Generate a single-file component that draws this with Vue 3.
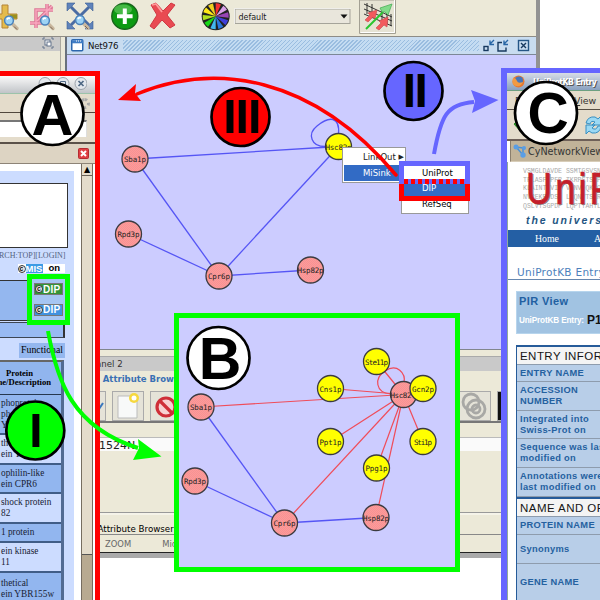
<script setup>
const pink = '#ff9999'
const yellow = '#ffff00'

const mainNodes = [
  { x: 135, y: 159, label: 'Sba1p', fill: pink },
  { x: 128.5, y: 234, label: 'Rpd3p', fill: pink },
  { x: 219, y: 276, label: 'Cpr6p', fill: pink },
  { x: 310.5, y: 270, label: 'Hsp82p', fill: pink },
  { x: 338.5, y: 146.5, label: 'Hsc82p', fill: yellow },
]
const mainEdges = [
  [0, 4], [0, 2], [1, 2], [2, 4], [2, 3],
]

const subNodes = [
  { x: 201, y: 407, label: 'Sba1p', fill: pink },
  { x: 195, y: 481, label: 'Rpd3p', fill: pink },
  { x: 284.5, y: 523, label: 'Cpr6p', fill: pink },
  { x: 376, y: 517.5, label: 'Hsp82p', fill: pink },
  { x: 376.5, y: 361.5, label: 'Ste11p', fill: yellow },
  { x: 330.5, y: 388.5, label: 'Cns1p', fill: yellow },
  { x: 330.5, y: 441.5, label: 'Ppt1p', fill: yellow },
  { x: 376.5, y: 468, label: 'Ppg1p', fill: yellow },
  { x: 423, y: 441.5, label: 'Sti1p', fill: yellow },
  { x: 403.5, y: 394.5, label: 'Hsc82', fill: pink },
  { x: 423, y: 388.5, label: 'Gcn2p', fill: yellow },
]
const subEdges = [
  [0, 2, 'blue'], [1, 2, 'blue'], [2, 3, 'blue'],
  [0, 9, 'red'], [2, 9, 'red'], [3, 9, 'red'], [4, 9, 'red'],
  [5, 9, 'red'], [6, 9, 'red'], [7, 9, 'red'], [8, 9, 'red'],
]
const labelWidths = { Hsp82p: 26, Hsc82p: 26, Ste11p: 23, Hsc82: 21, Sti1p: 18 }

const badges = [
  { x: 52.5, y: 114, r: 31, t: 'A', fill: '#fff', size: 58, base: 134.5, tx: 52.5 },
  { x: 240.5, y: 117, r: 29, t: 'III', fill: '#f00', size: 48, base: 133.3, tx: 242 },
  { x: 413.5, y: 91, r: 29, t: 'II', fill: '#6666ff', size: 48, base: 107.3, tx: 415.3 },
  { x: 546, y: 113, r: 31, t: 'C', fill: '#fff', size: 57, base: 132.5, tx: 548 },
  { x: 218.5, y: 358, r: 31, t: 'B', fill: '#fff', size: 59, base: 379, tx: 220 },
  { x: 35.3, y: 430.5, r: 29, t: 'I', fill: '#0f0', size: 48, base: 447.3, tx: 36 },
]

const wheel = ['#f33030', '#d9a0e8', '#9845b5', '#4040d8', '#2b78e0', '#42b8f0', '#18d818', '#b0e020', '#ffe818', '#f0d020']
function wedge(i) {
  const a = ((i * 36 - 90) * Math.PI) / 180
  const b = ((i * 36 - 66) * Math.PI) / 180
  return `M0 0L${13 * Math.cos(a)} ${13 * Math.sin(a)}A13 13 0 0 1 ${13 * Math.cos(b)} ${13 * Math.sin(b)}Z`
}

const proteins = [
  { h: 40, lines: ['phoprotein', 'phatase', 'YPH1'], dark: true },
  { h: 30, lines: ['thetical', 'ein YBR1'], dark: false },
  { h: 29, lines: ['ophilin-like', 'ein CPR6'], dark: true },
  { h: 30, lines: ['shock protein', '82'], dark: false },
  { h: 19, lines: ['1 protein'], dark: true },
  { h: 30, lines: ['ein kinase', '11'], dark: false },
  { h: 34, lines: ['thetical', 'ein YBR155w'], dark: true },
]
const entryRows = [
  { h: 17, lines: ['ENTRY NAME'] },
  { h: 29, lines: ['ACCESSION', 'NUMBER'] },
  { h: 28, lines: ['Integrated into', 'Swiss-Prot on'] },
  { h: 29, lines: ['Sequence was last', 'modified on'] },
  { h: 29, lines: ['Annotations were', 'last modified on'] },
]
const nameRows = [
  { h: 18, lines: ['PROTEIN NAME'] },
  { h: 29, lines: ['Synonyms'] },
  { h: 38, lines: ['GENE NAME'] },
]
</script>

<template>
  <main class="desktop">
    <section class="app-window">
      <header class="toolbar">
        <svg width="440" height="36" viewBox="0 0 440 36">
          <defs>
            <g id="lens">
              <path d="M4 4l4 4" stroke="#c9b79d" stroke-width="3.4" stroke-linecap="round" />
              <path d="M5 6l3 3" stroke="#7b6552" stroke-width="1" />
              <circle r="4.4" fill="#9dd3f5" stroke="#4a82bb" stroke-width="1.5" />
              <path d="M-2-1q1-2 3-1" stroke="#fff" stroke-width="1.8" fill="none" />
            </g>
          </defs>
          <path d="M-5 14h7V5h6v9h9v5H8v9H2v-9h-7z" fill="#e4bb4c" stroke="#b58335" />
          <path d="M10 14.500h7v4h-7z" fill="#98901f" />
          <use href="#lens" x="9" y="20.500" />
          <path d="M30 23h17V4M36 28V10h17M37 21L52 6" fill="none" stroke="#dc7795" stroke-width="3.500" />
          <path d="M30 23h17V4M36 28V10h17M37 21L52 6" fill="none" stroke="#f9a8bf" stroke-width="1.400" />
          <use href="#lens" x="45" y="20.500" />
          <path d="M71 7l18 18M89 7L71 25" stroke="#4a6ca3" stroke-width="3" />
          <g fill="#5f83bb" stroke="#3c5f95" stroke-width=".6">
            <path d="M67 3h8l-8 8zM93 3h-8l8 8zM67 29h8l-8-8zM93 29h-8l8-8z" />
          </g>
          <use href="#lens" x="80" y="20" />
          <circle cx="124.8" cy="16.2" r="13" fill="#0d9a13" stroke="#17641a" stroke-width="1.4" />
          <ellipse cx="123" cy="9.5" rx="9" ry="5" fill="#5fc65c" opacity=".7" />
          <path d="M124.8 8.5v15.5M117 16.2h15.6" stroke="#fff" stroke-width="4" />
          <path d="M151 5l5-2 7 8 8-8 4 2-8 10 8 10-5 3-8-8-8 9-4-3 7-11z" fill="#e94a52" stroke="#cf3843" />
          <path d="M152 5l4-1 6 8" stroke="#ff9a9a" stroke-width="1.800" fill="none" />
          <g transform="translate(215.7 16.3)">
            <circle r="14" fill="#222" />
            <path v-for="(c, i) in wheel" :key="i" :d="wedge(i)" :fill="c" />
          </g>
          <rect x="235" y="9" width="115" height="14.5" fill="#e9e6dc" stroke="#a5a49a" />
          <path d="M234.5 24V8.5H351" stroke="#fff" fill="none" opacity=".7" />
          <text x="238.5" y="19.5" class="ui" textLength="28">default</text>
          <path d="M340.5 14.5h7l-3.5 4z" fill="#111" />
          <path d="M359.5 33.5V0h36v33.5z" fill="#e6e3d4" stroke="#a3a093" />
          <path d="M360.5 32.5h34V0" stroke="#fff" fill="none" />
          <path d="M364 4l28 13M364 9l28 12M364 14l28 12M367 3v11M372 4v13M382 9v12M387 12v12M391 14v12" stroke="#222" stroke-width=".9" />
          <path d="M365 20l5-5-2-2 9-3-2 9-2-2-5 5zM376 28l5-5-2-2 9-4-1 10-3-2-5 5z" fill="#f25a5d" stroke="#c9444c" stroke-width=".6" />
          <path d="M366 29l17-17" stroke="#29c52f" stroke-width="2" />
          <path d="M382 12l-2-4 12-4-4 11-3-3z" fill="#82db8a" stroke="#40a950" stroke-width=".7" />
        </svg>
      </header>
      <div class="workspace">
        <aside class="left-panel">
          <div class="left-title">
            <svg width="12" height="12" viewBox="0 0 12 12" fill="none" stroke="#64748c">
              <path d="M1 3V1h2M9 1h2v2M11 9v2H9M3 11H1V9" />
              <rect x="3" y="3" width="5" height="5" fill="#fff" /><rect x="5" y="5" width="4" height="4" fill="#fff" />
            </svg>
          </div>
        </aside>
        <section class="net-frame">
          <header class="net-title">
            <svg width="13" height="13" viewBox="0 0 13 13"><rect x=".75" y=".75" width="11" height="11" rx="1" fill="#fff" stroke="#2c67ae" stroke-width="1.5" /><path d="M1 2.8h11" stroke="#3f7cc4" stroke-width="3" /><path d="M5 2h1M7 2h1M9 2h1" stroke="#fff" /></svg>
            <span class="net-name">Net976</span>
            <span class="hatch"></span>
            <svg class="frame-buttons" width="48" height="13" viewBox="0 0 48 13" fill="none" stroke="#17395f" stroke-width="1.4">
              <rect x="1" y="7.5" width="4" height="4" /><path d="M11 1L7 5M7 1.5v4h4" stroke="#2866a5" />
              <path d="M19 3.5h-4V12h8V8.5" /><path d="M25 1l-4 4M21 1.5v4h4" stroke="#2866a5" />
              <rect x="35.5" y="1.5" width="10" height="10" stroke="#245585" /><path d="M38 4l5 5M43 4l-5 5" />
            </svg>
          </header>
          <div class="canvas"></div>
        </section>
      </div>
      <section class="data-panel">
        <div class="panel-title">Data Panel 2</div>
        <div class="attr-title">Node Attribute Browser</div>
        <div class="attr-tools">
          <span class="tool"><svg width="30" height="32" viewBox="0 0 30 32"><path d="M24 17l4-6" stroke="#3977bd" stroke-width="2" /></svg></span>
          <span class="tool"><svg width="30" height="32" viewBox="0 0 30 32"><path d="M5 4h19v22H5z" fill="#f8f9f9" stroke="#bbb" /><circle cx="21" cy="6" r="5" fill="#f6d83e" /><circle cx="21" cy="6" r="2.5" fill="#fff" /></svg></span>
          <span class="tool"><svg width="30" height="32" viewBox="0 0 30 32"><circle cx="15" cy="15" r="9" fill="#f7d1d1" stroke="#cf2f38" stroke-width="3.2" /><path d="M9 9l12 12" stroke="#cf2f38" stroke-width="3.2" /></svg></span>
          <span class="tool far"><svg width="30" height="32" viewBox="0 0 30 32" fill="none" stroke="#a8a8a5" stroke-width="2.800"><circle cx="11" cy="10" r="8" /><circle cx="16" cy="17" r="9" /><circle cx="16" cy="17" r="4" /></svg></span>
          <span class="tool fx"></span>
        </div>
        <div class="column-head"></div>
        <div class="data-row">1524N</div>
        <div class="data-empty"></div>
        <div class="attr-tab">Node Attribute Browser</div>
        <footer class="status"><span>ZOOM</span><span>Middle</span></footer>
      </section>
    </section>

    <section class="browser browser-a">
      <header class="a-title">
        <svg width="50" height="15" viewBox="0 0 50 15"><g fill="#e4e8ed" stroke="#9ba2aa"><circle cx="8" cy="7.5" r="6" /><circle cx="26" cy="7.5" r="6" /><path d="M23.500 5.500h5v4h-5z" stroke="#506985" /><circle cx="44" cy="7.500" r="6" /></g><path d="M41.500 5l5 5M46.500 5l-5 5" stroke="#506985" stroke-width="1.700" /></svg>
      </header>
      <div class="a-menu"><span class="throbber"></span></div>
      <div class="a-address"><span></span></div>
      <div class="a-tabs"><svg width="11" height="11" viewBox="0 0 11 11"><rect x=".5" y=".5" width="10" height="10" rx="1" fill="#df3f42" stroke="#b52b32" /><path d="M3 3l5 5M8 3L3 8" stroke="#fff" stroke-width="2" /></svg></div>
      <div class="a-body">
        <div class="a-page">
          <div class="a-box"></div>
          <div class="search-links">RCH:TOP][LOGIN]</div>
          <div class="mis"><span class="logo"><b class="c-mark">c</b><i>MIS</i></span><strong>on</strong></div>
          <div class="dip-row"></div>
          <div class="blank-row"></div>
          <div class="functional"><span>Functional</span></div>
          <div class="protein-table">
            <div class="protein-head"><span>Protein</span><span>me/Description</span></div>
            <div v-for="(p, i) in proteins" :key="i" class="protein" :class="{ dark: p.dark }" :style="{ height: p.h + 'px' }">
              <span v-for="l in p.lines" :key="l">{{ l }}</span>
            </div>
          </div>
        </div>
        <div class="scroll"><span class="scroll-up">▲</span><span class="thumb"></span></div>
      </div>
    </section>

    <section class="browser browser-c">
      <header class="c-title">
        <svg width="13" height="13" viewBox="0 0 13 13"><circle cx="6.5" cy="6.5" r="6" fill="#e87831" /><circle cx="7" cy="5.5" r="4" fill="#4776b9" /><path d="M1 3q3 0 4 3t6 1q-2 5-7 4T1 3" fill="#f29a43" /></svg>
        <span>UniProtKB Entry</span>
      </header>
      <div class="c-menu"><span>File</span><span><u>V</u>iew</span></div>
      <div class="c-nav">
        <svg width="20" height="26" viewBox="0 0 20 26"><path d="M1 12l8-7v5h9v6H9v5z" fill="#43bb35" stroke="#258d27" /></svg>
        <svg width="20" height="22" viewBox="0 0 20 22"><path d="M2 9Q4 2 11 3l3 2 3-3v9H8l3-3Q7 6 6 10zM17 12q-1 8-9 7l-3-2-3 3v-9h9l-3 3q4 3 6-2z" fill="#9bd9f4" stroke="#378fc2" /></svg>
      </div>
      <div class="c-tab"><svg width="14" height="14" viewBox="0 0 14 14"><path d="M3 3l7 1M4 4l6 7M10 4v7" stroke="#4b91d5" fill="none" stroke-width="1.5" /><g fill="#5a9ee5"><circle cx="3" cy="3" r="2.5" /><circle cx="11" cy="4" r="2" /><circle cx="10" cy="11" r="2.7" /></g></svg><span>CyNetworkView</span></div>
      <div class="c-page">
        <div class="hero">
          <div class="sequence">VSMGLDAVDE SSMTGSVSNK<br>TPLASFTPFP TKRPSTSKPT<br>KLAINTEVIL VVNVFQKRQP<br>NVPEKRPDSL LGQNVTSKR<br>QSLVTSGPDP LQPTYAHTLE</div>
          <div class="wordmark">UniProt</div>
          <div class="tagline">the universal</div>
        </div>
        <nav class="site-nav"><span>Home</span><span>About</span></nav>
        <h1>UniProtKB Entry</h1>
        <div class="pir"><strong>PIR View</strong><p><b>UniProtKB Entry:</b><span>P15108</span></p></div>
        <div class="entry-table">
          <div class="section-head">ENTRY INFORMATION</div>
          <div v-for="r in entryRows" :key="r.lines[0]" class="entry" :style="{ height: r.h + 'px' }"><span v-for="l in r.lines" :key="l">{{ l }}</span></div>
          <div class="section-head second">NAME AND ORIGIN</div>
          <div v-for="r in nameRows" :key="r.lines[0]" class="entry" :style="{ height: r.h + 'px' }"><span v-for="l in r.lines" :key="l">{{ l }}</span></div>
        </div>
      </div>
    </section>

    <section class="inset"></section>

    <svg class="graph" width="600" height="600" viewBox="0 0 600 600">
      <defs>
        <pattern id="dots" width="2" height="2" patternUnits="userSpaceOnUse"><path d="M0 0h1v1H0zM1 1h1v1H1z" fill="#333" opacity=".05" /></pattern>
      </defs>
      <g class="blue">
        <line v-for="([a, b], i) in mainEdges" :key="i" :x1="mainNodes[a].x" :y1="mainNodes[a].y" :x2="mainNodes[b].x" :y2="mainNodes[b].y" />
        <path d="M326 146.500C311 147 307 134 317 126C329 116 340 116 338.500 134" />
      </g>
      <line v-for="([a, b, c], i) in subEdges" :key="'s' + i" :class="c" :x1="subNodes[a].x" :y1="subNodes[a].y" :x2="subNodes[b].x" :y2="subNodes[b].y" />
      <path class="red" d="M391 394C375 393 374 378 385 371C397 363 406 373 404 383" />
      <g v-for="(n, i) in [...mainNodes, ...subNodes]" :key="'n' + i">
        <circle :cx="n.x" :cy="n.y" r="13" :fill="n.fill" stroke="#3b3b40" stroke-width="1.3" />
        <circle v-if="n.fill === pink" :cx="n.x" :cy="n.y" r="12.500" fill="url(#dots)" />
        <text class="node-label" :x="n.label === 'Hsc82' ? n.x - 2.5 : n.x" :y="n.y + 3" :textLength="labelWidths[n.label] || 22">{{ n.label }}</text>
      </g>
    </svg>

    <div class="menu">
      <div><span>LinkOut</span><i>▶</i></div>
      <div class="selected"><span>MiSink</span></div>
    </div>
    <div class="submenu"><span>UniProt</span><span class="selected">DIP</span><span>RefSeq</span></div>
    <div class="uniprot-outline"></div>
    <div class="dip-outline"></div>
    <div class="dip-callout"><span class="green-logo"><b class="c-mark">c</b><i>DIP</i></span><span><b class="c-mark">c</b><i>DIP</i></span></div>

    <svg class="annotations" width="600" height="600" viewBox="0 0 600 600">
      <path d="M396 175C312 75 215 62 137 94" fill="none" stroke="red" stroke-width="3.500" stroke-linecap="round" />
      <path d="M118 100L136 84L135 93L141 101Z" fill="red" />
      <path d="M434 154C441 115 447 104 474 102" fill="none" stroke="#6666ff" stroke-width="4" />
      <path d="M498.500 100L471 90L475 101L472 113Z" fill="#6666ff" />
      <path d="M48 331C57 381 72 427 138 448" fill="none" stroke="#00ff00" stroke-width="4" />
      <path d="M161.500 456.500L138 439L139 448L133 460Z" fill="#00ff00" />
      <g v-for="b in badges" :key="b.t">
        <circle :cx="b.x" :cy="b.y" :r="b.r" :fill="b.fill" stroke="#000" stroke-width="2.700" />
        <text :x="b.tx" :y="b.base" :font-size="b.size" class="badge-text" :textLength="b.t === 'III' ? 38 : b.t === 'II' ? 25 : undefined">{{ b.t }}</text>
      </g>
    </svg>
  </main>
</template>

<style>
body { background: #fff; }
</style>
<style scoped>
* { box-sizing: border-box; }
.desktop { width: 600px; height: 600px; position: relative; overflow: hidden; background: #fff; font-family: "DejaVu Sans", sans-serif; white-space: nowrap; }
svg { display: block; flex: none; }
.app-window { width: 540px; height: 558px; background: #ece9d8; border-right: 4px solid #929292; display: flex; flex-direction: column; }
.toolbar { height: 37px; border-bottom: 1px solid #8e8c86; flex: none; }
.ui { font-size: 8px; fill: #222; }
.workspace { height: 313px; display: flex; flex: none; }
.left-panel { width: 61px; border-right: 1px solid #aaa89e; margin-right: 4px; }
.left-title { height: 14px; background: #c9c9c9; display: flex; justify-content: flex-end; padding-right: 6px; }
.net-frame { flex: 1; display: flex; flex-direction: column; border-left: 2px solid #68707c; }
.net-title { height: 18px; display: flex; align-items: center; gap: 4px; padding: 0 5px 0 4px; background: #c8dcf0; border-bottom: 1px solid #7c8796; flex: none; }
.net-name { font-size: 8.600px; color: #111; width: 31px; letter-spacing: -.2px; }
.hatch { flex: 1; height: 11px; background: repeating-linear-gradient(135deg, #9abde0 0, #9abde0 1px, #c4dcf2 1px, #c4dcf2 2.800px); }
.canvas { flex: 1; background: #ccccff; border-bottom: 1px solid #81868e; }
.data-panel { flex: 1; display: flex; flex-direction: column; border-bottom: 5px solid #aaa; padding-top: 6px; }
.panel-title { height: 15px; background: #c9c9c9; border-top: 1px solid #aaa; padding-left: 68px; line-height: 15px; color: #333; flex: none; font-size: 8.600px; }
.attr-title { height: 17px; padding-left: 75px; font-size: 8.500px; line-height: 17px; font-weight: bold; color: #3a70b4; flex: none; }
.attr-tools { height: 35px; display: flex; padding-left: 74px; gap: 6px; padding-top: 3px; border-bottom: 2px solid #777; flex: none; }
.tool { width: 32px; height: 30px; border: 1px solid #aaa; overflow: hidden; background: #e5e3d8; flex: none; }
.far { margin-left: 271px; }
.fx { background: #111; }
.column-head { height: 15px; border-bottom: 1px solid #bbb; flex: none; }
.data-row { height: 13px; background: #fafafa; padding: 1px 0 0 99px; font-size: 11px; line-height: 13px; color: #222; flex: none; }
.data-empty { flex: 1; border-bottom: 1px solid #999; }
.attr-tab { height: 22px; padding-left: 72px; font-size: 8.700px; line-height: 28px; border-top: 2px solid #f5f3e9; border-bottom: 1px solid #888; flex: none; }
.status { height: 18px; border-bottom: 1px solid #222; padding-left: 105px; display: flex; gap: 31px; align-items: center; color: #666; font-size: 8.400px; flex: none; }
.browser { position: absolute; overflow: hidden; background: #fff; }
.browser-a { left: -5px; top: 71px; width: 105px; height: 535px; border: 5px solid red; display: flex; flex-direction: column; }
.a-title { height: 17px; display: flex; align-items: flex-start; justify-content: flex-end; padding-right: 8px; background: linear-gradient(#fafafa, #c1c4c8); flex: none; }
.a-menu { height: 20px; background: #e4dccb; border-top: 1px solid #9cc3aa; border-bottom: 1px solid #51483e; display: flex; justify-content: flex-end; padding: 4px 5px; flex: none; }
.throbber { width: 11px; height: 11px; border: 3px dotted #aaa; border-radius: 50%; }
.a-address { height: 31px; background: #e4dccb; padding: 7px 8px 5px 0; border-bottom: 2px solid #5a5149; display: flex; flex: none; }
.a-address span { flex: 1; background: #fff; border-top: 2px solid #777; border-right: 1px solid #ddd; }
.a-tabs { height: 20px; background: #ddd4c3; display: flex; justify-content: flex-end; align-items: center; padding-right: 6px; border-bottom: 1px solid #8d8477; flex: none; }
.a-body { flex: 1; min-height: 0; display: flex; }
.a-page { width: 74px; margin-top: 7px; background: #ccdcff; display: flex; flex-direction: column; overflow: hidden; flex: none; }
.a-box { width: 68px; height: 65px; background: #fff; border: 1px solid #333; border-left: 0; margin-top: 12px; flex: none; }
.search-links { font: 8px/10px "Liberation Serif", serif; color: #52627e; width: 68px; margin-left: -1px; margin-top: 3px; height: 10px; flex: none; }
.mis { height: 11px; display: flex; justify-content: flex-end; padding-right: 9px; margin-top: 2px; align-items: center; font: bold 9.500px/9px "Liberation Sans", sans-serif; flex: none; }
.mis strong { background: #fff; padding: 0 5px; height: 9px; line-height: 8px; }
.logo { background: #fff; display: flex; height: 9px; align-items: center; }
.logo i { background: #3c9be5; color: #fff; font-style: normal; line-height: 9px; padding-right: 1px; }
.c-mark { display: block; width: 8px; height: 8px; border: 1px solid #333; border-radius: 50%; background: #eee; color: #111; font: bold 7px/5px "Liberation Sans", sans-serif; text-align: center; flex: none; }
.dip-row { height: 41px; border: 1px solid #333; margin: 6px 9px 1px 0; border-left: 0; background: #94b7ef; flex: none; }
.blank-row { height: 16px; border-top: 1px solid #3d4653; border-bottom: 1px solid #3d4653; border-right: 2px solid #333; margin-right: 9px; background: #98baf2; flex: none; }
.functional { height: 22px; display: flex; justify-content: flex-end; padding: 5px 9px 0 0; font: 9.800px "Liberation Serif", serif; flex: none; }
.functional span { background: #94b7ef; height: 15px; line-height: 13px; padding: 0 2px; }
.protein-table { width: 64px; border-right: 3px solid #526b93; border-top: 2px solid #666; flex: none; font: 9.300px "Liberation Serif", serif; }
.protein-head { height: 33px; background: #91b5ee; display: flex; flex-direction: column; align-items: center; justify-content: center; font-weight: bold; font-size: 8.600px; line-height: 9px; border-bottom: 1px solid #26384f; padding-right: 22px; }
.protein-head span:last-child { align-self: flex-end; margin-right: -12px; }
.protein { background: #ccdcff; display: flex; flex-direction: column; justify-content: center; line-height: 11px; border-bottom: 2px solid #405d87; color: #182234; padding-left: 1px; }
.protein.dark { background: #92b6ef; }
.scroll { width: 12px; margin-left: 7px; background: #b8aa91; display: flex; flex-direction: column; border-left: 1px solid #766d60; border-right: 1px solid #766d60; flex: none; }
.scroll-up { height: 12px; background: #e4dccb; font-size: 8px; line-height: 12px; text-align: center; border-bottom: 1px solid #6a6258; flex: none; }
.thumb { height: 379px; border-bottom: 1px solid #555; background: #e4dccb; flex: none; }
.browser-c { left: 501px; top: 68px; width: 110px; height: 540px; border: 6px solid #6666ff; border-top-width: 5px; display: flex; flex-direction: column; }
.c-title { height: 18px; display: flex; align-items: center; background: linear-gradient(#d6dce5, #8aa1c0); padding-left: 5px; gap: 8px; color: #fff; font: bold 8.600px "DejaVu Sans Condensed", "DejaVu Sans", sans-serif; text-shadow: 1px 1px #555; border-bottom: 1px solid #6da081; flex: none; }
.c-title span { letter-spacing: -.5px; }
.c-menu { height: 19px; background: #e4dccb; border-bottom: 1px solid #554d43; padding-left: 8px; display: flex; gap: 42px; font-size: 9.400px; align-items: center; flex: none; color: #333; }
.c-menu span:first-child { width: 17px; }
.c-nav { height: 31px; background: #e4dccb; display: flex; gap: 51px; align-items: center; padding-left: 6px; border-bottom: 2px solid #6e6058; flex: none; }
.c-tab { height: 21px; background: #c1b399; margin-left: 3px; border-left: 1px solid #8a7e6d; display: flex; align-items: center; gap: 1px; padding-left: 2px; font-size: 9.600px; color: #333; flex: none; border-bottom: 1px solid #d8cdb8; }
.c-page { flex: 1; border-left: 1px solid #90aa9b; background: #fff; }
.hero { height: 68px; position: relative; overflow: hidden; }
.sequence { position: absolute; left: 15px; top: 6px; font: 6.500px/8.700px "Liberation Mono", monospace; color: #aaa; }
.wordmark { position: absolute; left: 18px; top: 2px; font: 45px/50px "Liberation Sans", sans-serif; color: #c41f2b; text-shadow: 1.500px 1px #888; -webkit-text-stroke: .7px #c41f2b; transform: scaleX(.8); transform-origin: left; letter-spacing: 4px; }
.tagline { position: absolute; left: 18px; bottom: 4px; font: italic bold 10.500px "Liberation Sans", sans-serif; color: #245582; letter-spacing: 1.900px; }
.site-nav { height: 17px; background: #245fa4; display: flex; align-items: center; gap: 35px; padding-left: 27px; color: #fff; font: 9.800px "Liberation Serif", serif; }
h1 { font: 10.500px/14px "DejaVu Sans", sans-serif; margin: 18px 0 0 9px; color: #4c7fbb; letter-spacing: .3px; }
h1::after { content: ''; display: block; height: 1px; margin-left: -9px; background: #6687af; }
.pir { margin: 11px 0 0 8px; height: 43px; background: #a1c3e2; color: #2260a1; padding: 3px 2px; border: 1px solid #b7d5ed; }
.pir strong { display: block; font: bold 11px/12px "Liberation Sans", sans-serif; letter-spacing: .4px; }
.pir p { margin: 3px 0 0; display: flex; align-items: center; gap: 3px; height: 20px; }
.pir b { color: #fff; font: bold 8.200px "Liberation Sans", sans-serif; letter-spacing: -.15px; }
.pir span { color: #111; font: bold 12px "Liberation Sans", sans-serif; }
.entry-table { margin: 11px 0 0 8px; border-left: 1px solid #265b99; border-top: 2px solid #265b99; font: bold 9.300px "Liberation Sans", sans-serif; color: #2561a0; letter-spacing: .3px; }
.section-head { height: 18px; background: #f4f4f4; border-bottom: 1px solid #8e9cad; padding-left: 3px; font: 11.500px/18px "Liberation Sans", sans-serif; color: #151515; letter-spacing: .45px; }
.section-head.second { border-top: 2px solid #265b99; height: 20px; }
.entry { background: #b8cee8; border-bottom: 1px solid #8e9cad; padding-left: 3px; display: flex; flex-direction: column; justify-content: center; line-height: 11px; }
.inset { position: absolute; left: 174px; top: 313px; width: 286px; height: 259px; border: 5px solid #0f0; background: #ccf; }
.graph, .annotations { position: absolute; left: 0; top: 0; }
.blue { stroke: #5555f5; stroke-width: 1.300; fill: none; }
.red { stroke: #f04c59; stroke-width: 1.200; fill: none; }
.node-label { font: 7.500px "DejaVu Sans Mono", monospace; text-anchor: middle; fill: #222; }
.badge-text { font-family: "Liberation Sans", sans-serif; font-weight: bold; text-anchor: middle; }
.menu { position: absolute; left: 342px; top: 147px; width: 64px; height: 36px; background: #fff; border: 1px solid #999; padding: 1px; font-size: 8.500px; }
.menu div { height: 16px; display: flex; align-items: center; padding: 0 0 0 19px; color: #222; justify-content: space-between; }
.menu i { font-style: normal; font-size: 7px; }
.menu .selected, .submenu .selected { background: #326bc5; color: #fff; }
.submenu { position: absolute; left: 401px; top: 163px; width: 68px; height: 51px; border: 1px solid #999; background: #fff; display: flex; flex-direction: column; font-size: 8.500px; }
.submenu span { height: 16px; padding-left: 20px; line-height: 18px; flex: none; }
.submenu .selected { line-height: 17px; height: 17px; }
.submenu span:last-child { line-height: 15px; }
.uniprot-outline { position: absolute; left: 399px; top: 161px; width: 71px; height: 23px; border: 5px solid #6666ff; }
.dip-outline { position: absolute; left: 399px; top: 184px; width: 71px; height: 17px; border: 5px solid red; border-top: 0; }
.dip-outline::before { content: ''; position: absolute; left: 0; right: 0; top: -5px; height: 5px; background: repeating-linear-gradient(90deg, red 0, red 4.500px, #6666ff 4.500px, #6666ff 7px); }
.dip-callout { position: absolute; left: 27px; top: 274px; width: 43px; height: 51px; border: 5px solid #0f0; background: #a6c5f2; display: flex; flex-direction: column; align-items: center; justify-content: space-around; font: bold 10px "Liberation Sans", sans-serif; }
.dip-callout span { width: 29px; height: 12px; background: #4192df; display: flex; border: 1px solid #777; color: #fff; align-items: center; }
.dip-callout .green-logo { background: #359337; }
.dip-callout i { font-style: normal; letter-spacing: .3px; }
</style>
